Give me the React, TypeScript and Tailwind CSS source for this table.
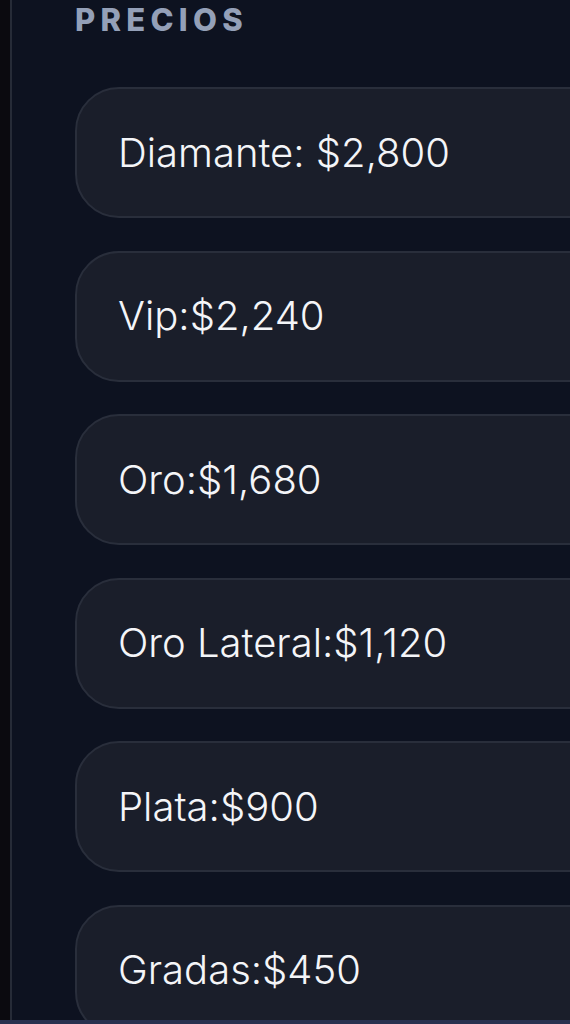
const prices = [
  "Diamante: $2,800",
  "Vip:$2,240",
  "Oro:$1,680",
  "Oro Lateral:$1,120",
  "Plata:$900",
  "Gradas:$450",
];

export default function App() {
  return (
    <div
      className="flex h-[1024px] w-[570px] overflow-hidden bg-[#0a0b10]"
      style={{ fontFamily: "Inter, 'Noto Sans', sans-serif" }}
    >
      <div className="w-[10px] shrink-0 bg-[#0b0a0f]" />
      <div className="flex min-w-0 flex-1 flex-col border-l-2 border-[#262b37] bg-[#0d1220]">
        <div className="flex-1 overflow-hidden pl-[63px]">
          <h2 className="-mt-[1px] text-[31px] leading-[42px] font-extrabold tracking-[0.17em] text-[#94a0b8]">
            PRECIOS
          </h2>
          <div className="mt-[46px] flex w-[560px] flex-col gap-[32.6px]">
            {prices.map((p) => (
              <div
                key={p}
                className="flex h-[131px] shrink-0 items-center rounded-[44px] border-2 border-[#292e3b] bg-[#1a1e2a] pl-[41px]"
              >
                <span className="text-[40px] leading-none font-light text-[#f4f5f8]">
                  {p}
                </span>
              </div>
            ))}
          </div>
        </div>
      </div>
      <div className="fixed bottom-0 left-0 h-[4px] w-[570px] bg-[#29304f]" />
    </div>
  );
}
